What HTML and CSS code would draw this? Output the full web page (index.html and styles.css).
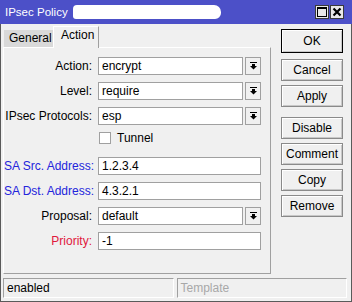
FILE: index.html
```html
<!DOCTYPE html>
<html lang="en">
    <head>
        <meta charset="UTF-8">
        <title>IPsec Policy</title>
        <link rel="stylesheet" href="styles.css">
    </head>
    <body>
        <div class="window">
            <div class="titlebar">
                <span class="title">IPsec Policy</span>
                <span class="scribble"></span>
                <div class="title-buttons">
                    <span class="tbtn">
                        <svg width="10" height="10" viewBox="0 0 10 10"><rect x="0.5" y="0.5" width="9" height="9" fill="none" stroke="#000"/><rect x="0" y="0" width="10" height="2" fill="#000"/></svg>
                    </span>
                    <span class="tbtn">
                        <svg width="10" height="10" viewBox="0 0 10 10"><path d="M1.5 1.5 L8.5 8.5 M8.5 1.5 L1.5 8.5" stroke="#000" stroke-width="2.2"/></svg>
                    </span>
                </div>
            </div>

            <div class="main">
                <div class="left">
                    <div class="tabs">
                        <span class="tab">General</span>
                        <span class="tab active">Action</span>
                    </div>
                    <div class="panel">
                        <div class="form">
                            <label>Action:</label>
                            <div class="field">
                                <span class="input">encrypt</span>
                                <span class="drop"><svg width="7" height="8" viewBox="0 0 7 8"><rect x="0" y="0" width="7" height="1"/><rect x="2" y="2" width="3" height="2"/><polygon points="0,4 7,4 3.5,7.5"/></svg></span>
                            </div>

                            <label>Level:</label>
                            <div class="field">
                                <span class="input">require</span>
                                <span class="drop"><svg width="7" height="8" viewBox="0 0 7 8"><rect x="0" y="0" width="7" height="1"/><rect x="2" y="2" width="3" height="2"/><polygon points="0,4 7,4 3.5,7.5"/></svg></span>
                            </div>

                            <label>IPsec Protocols:</label>
                            <div class="field">
                                <span class="input">esp</span>
                                <span class="drop"><svg width="7" height="8" viewBox="0 0 7 8"><rect x="0" y="0" width="7" height="1"/><rect x="2" y="2" width="3" height="2"/><polygon points="0,4 7,4 3.5,7.5"/></svg></span>
                            </div>

                            <span></span>
                            <div class="check-row">
                                <span class="checkbox"></span>
                                <span>Tunnel</span>
                            </div>

                            <label class="blue">SA Src. Address:</label>
                            <div class="field"><span class="input">1.2.3.4</span></div>

                            <label class="blue">SA Dst. Address:</label>
                            <div class="field"><span class="input">4.3.2.1</span></div>

                            <label>Proposal:</label>
                            <div class="field">
                                <span class="input">default</span>
                                <span class="drop"><svg width="7" height="8" viewBox="0 0 7 8"><rect x="0" y="0" width="7" height="1"/><rect x="2" y="2" width="3" height="2"/><polygon points="0,4 7,4 3.5,7.5"/></svg></span>
                            </div>

                            <label class="red">Priority:</label>
                            <div class="field"><span class="input">-1</span></div>
                        </div>
                    </div>
                </div>

                <div class="buttons">
                    <button class="default">OK</button>
                    <button>Cancel</button>
                    <button>Apply</button>
                    <button class="spaced">Disable</button>
                    <button>Comment</button>
                    <button>Copy</button>
                    <button>Remove</button>
                </div>
            </div>

            <div class="statusbar">
                <span class="status">enabled</span>
                <span class="status muted">Template</span>
            </div>
        </div>
    </body>
</html>
```

FILE: styles.css
```css
* {
    box-sizing: border-box;
}
body {
    margin: 0;
    font-family: "Liberation Sans", Arial, sans-serif;
    font-size: 12px;
    color: #000;
}
.window {
    width: 352px;
    height: 302px;
    background-color: #f0f0f0;
    border: 1px solid #5a5a5a;
    border-top: none;
    display: flex;
    flex-direction: column;
}
.titlebar {
    height: 24px;
    margin: 0 -1px;
    background-color: #4c50c8;
    display: flex;
    align-items: center;
    padding-left: 5px;
    color: #fff;
}
.title {
    font-size: 11.5px;
}
.scribble {
    width: 148px;
    height: 14px;
    margin-left: 5px;
    background-color: #fff;
    border-radius: 4px 7px 6px 3px;
}
.title-buttons {
    margin-left: auto;
    margin-right: 8px;
    display: flex;
    gap: 1px;
}
.tbtn {
    width: 14px;
    height: 14px;
    background-color: #e8e8e8;
    border: 1px solid #3a3a3a;
    display: flex;
    align-items: center;
    justify-content: center;
}
.main {
    display: flex;
    padding-left: 2px;
}
.left {
    width: 268px;
}
.tabs {
    display: flex;
    align-items: flex-end;
    height: 23px;
    padding-left: 1px;
}
.tab {
    height: 17px;
    width: 49px;
    background-color: #d9d9d9;
    padding-left: 5px;
    line-height: 17px;
}
.tab.active {
    height: 22px;
    width: 46px;
    background-color: #f0f0f0;
    border: 1px solid #fff;
    border-bottom: none;
    border-right-color: #a0a0a0;
    padding-left: 7px;
    line-height: 17px;
    margin-bottom: -1px;
    position: relative;
}
.panel {
    height: 227px;
    border: 1px solid #fff;
    border-right-color: #a0a0a0;
    border-bottom-color: #a0a0a0;
    padding-top: 9px;
}
.form {
    display: grid;
    grid-template-columns: 88px 163px;
    column-gap: 6px;
    row-gap: 7px;
    grid-auto-rows: 18px;
}
.form label {
    text-align: right;
    line-height: 18px;
    white-space: nowrap;
}
.form label.blue {
    color: #2424dc;
}
.form label.red {
    color: #e0183c;
}
.field {
    display: flex;
    gap: 2px;
}
.input {
    flex: 1;
    height: 18px;
    background-color: #fff;
    border: 1px solid #a0a0a0;
    padding-left: 3px;
    line-height: 16px;
}
.drop {
    width: 16px;
    height: 18px;
    border: 1px solid #a0a0a0;
    background-color: #f0f0f0;
    display: flex;
    align-items: center;
    justify-content: center;
}
.check-row {
    display: flex;
    align-items: center;
    gap: 6px;
    height: 11px;
    padding-left: 1px;
}
.checkbox {
    width: 12px;
    height: 12px;
    background-color: #fff;
    border: 1px solid #a0a0a0;
}
.buttons {
    margin-left: 10px;
    width: 62px;
    display: flex;
    flex-direction: column;
    gap: 4px;
    padding-top: 5px;
}
.buttons button {
    height: 22px;
    font-family: inherit;
    font-size: 12px;
    background-color: #f0f0f0;
    border: 1px solid #8a8a8a;
    box-shadow: inset 1px 1px 0 #fff, inset -1px -1px 0 #c8c8c8;
    padding: 0;
    color: #000;
}
.buttons button.default {
    height: 24px;
    border-color: #000;
    margin-bottom: 2px;
}
.buttons button.spaced {
    margin-top: 6px;
}
.statusbar {
    display: flex;
    gap: 3px;
    margin-top: 4px;
    padding: 0 4px 0 2px;
}
.status {
    flex: 1;
    height: 20px;
    border: 1px solid #a0a0a0;
    border-right-color: #fff;
    border-bottom-color: #fff;
    padding-left: 3px;
    line-height: 18px;
}
.status.muted {
    color: #a8a8a8;
}
```
